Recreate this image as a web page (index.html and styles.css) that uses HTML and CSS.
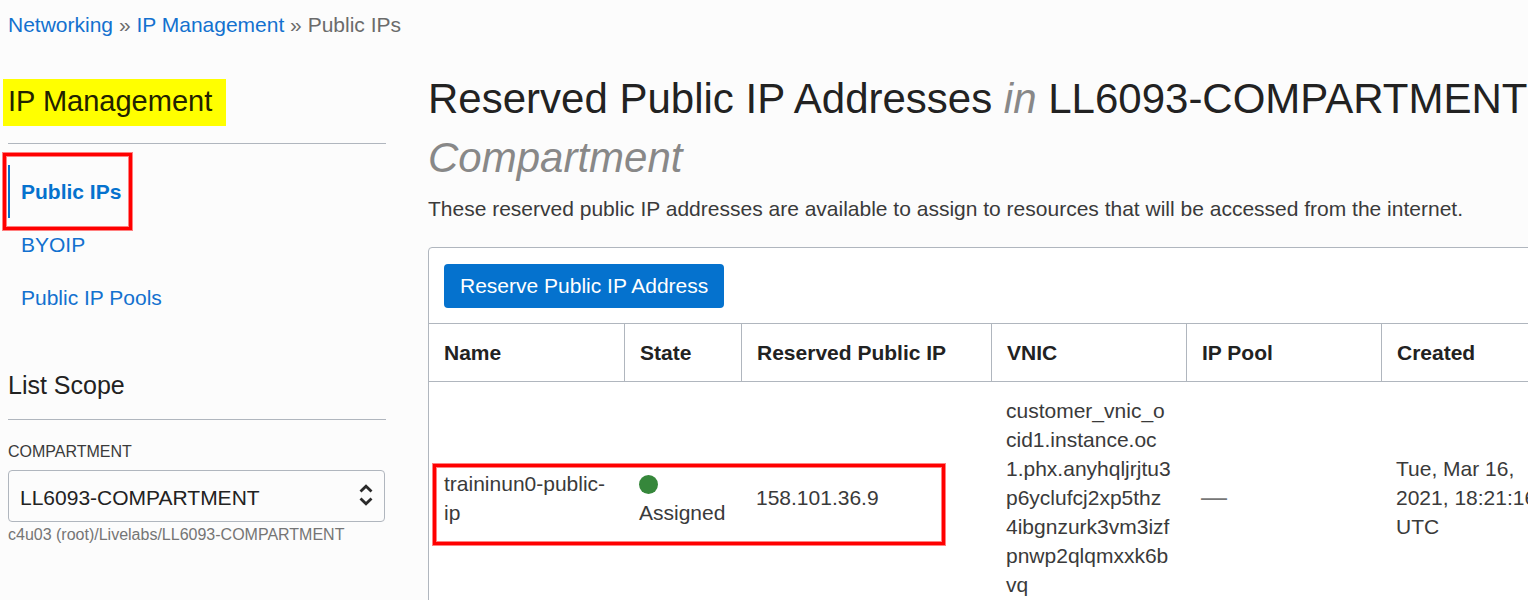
FILE: index.html
```html
<!DOCTYPE html>
<html lang="en">
<head>
<meta charset="utf-8">
<title>Public IPs</title>
<link rel="stylesheet" href="styles.css">
</head>
<body>
<nav class="breadcrumb" aria-label="Breadcrumb"><a href="#">Networking</a> » <a href="#">IP Management</a> » <span>Public IPs</span></nav>
<div class="layout">
  <aside class="sidebar">
    <div class="section-head"><h2 class="section-title">IP Management</h2></div>
    <ul class="menu">
      <li><a class="menu-link active" href="#" aria-current="page">Public IPs<span class="callout callout-menu"></span></a></li>
      <li><a class="menu-link" href="#">BYOIP</a></li>
      <li><a class="menu-link" href="#">Public IP Pools</a></li>
    </ul>
    <h3 class="scope-title">List Scope</h3>
    <label class="field-label" for="compartment">COMPARTMENT</label>
    <div class="select-wrap">
      <select class="select" id="compartment"><option>LL6093-COMPARTMENT</option></select>
      <svg class="select-icon" viewBox="0 0 14 22" aria-hidden="true"><path d="M1.500 7.500 7 2.200l5.500 5.300M1.500 14.500 7 19.800l5.500-5.300"/></svg>
    </div>
    <p class="path">c4u03 (root)/Livelabs/LL6093-COMPARTMENT</p>
  </aside>
  <main class="main">
    <h1 class="title">Reserved Public IP Addresses <em>in</em> LL6093-COMPARTMENT <em>Compartment</em></h1>
    <p class="description">These reserved public IP addresses are available to assign to resources that will be accessed from the internet.</p>
    <section class="card">
      <div class="toolbar"><button class="button" type="button">Reserve Public IP Address</button></div>
      <table class="table">
        <colgroup><col class="col-name"><col class="col-state"><col class="col-ip"><col class="col-std"><col class="col-std"><col class="col-std"></colgroup>
        <thead>
          <tr><th>Name</th><th>State</th><th>Reserved Public IP</th><th>VNIC</th><th>IP Pool</th><th>Created</th></tr>
        </thead>
        <tbody>
          <tr>
            <td>traininun0-public-ip<span class="callout callout-row"></span></td>
            <td><span class="dot"></span><br>Assigned</td>
            <td>158.101.36.9</td>
            <td class="vnic">customer_vnic_ocid1.instance.oc1.phx.anyhqljrjtu3p6yclufcj2xp5thz4ibgnzurk3vm3izfpnwp2qlqmxxk6bvq</td>
            <td class="empty">—</td>
            <td>Tue, Mar 16, 2021, 18:21:16 UTC</td>
          </tr>
        </tbody>
      </table>
    </section>
  </main>
</div>
</body>
</html>
```
FILE: styles.css
```css
* { box-sizing: border-box; }

body {
  margin: 0;
  padding: 10px 0 0 8px;
  overflow: hidden;
  background: #fcfcfc;
  color: #3a3a3a;
  font: 21px/29px "Liberation Sans", Arial, sans-serif;
}

h1, h2, h3, p, ul { margin: 0; padding: 0; font-weight: 400; }

a { color: #1371cf; text-decoration: none; }

.breadcrumb { color: #6b6b6b; }

.layout {
  display: grid;
  grid-template-columns: 378px minmax(0, 1fr);
  gap: 42px;
  padding-top: 30px;
}

/* Sidebar */
.section-head {
  margin-top: 10px;
  padding-bottom: 17px;
  border-bottom: 1px solid #b0b6be;
}

.section-title {
  width: fit-content;
  margin-left: -5px;
  padding: 0 14px 3px 5px;
  background: #ff0;
  color: #222200;
  font-size: 29px;
  line-height: 44px;
}

.menu { list-style: none; padding-top: 21px; }

.menu-link {
  display: block;
  width: fit-content;
  padding: 12px 0 12px 11px;
  border-left: 2px solid transparent;
}

.menu-link.active {
  position: relative;
  border-color: #0572ce;
  color: #0572ce;
  font-weight: 700;
}

.scope-title {
  padding: 46px 0 19px;
  border-bottom: 1px solid #b0b6be;
  color: #222;
  font-size: 25px;
  line-height: 30px;
}

.field-label {
  display: block;
  margin: 21px 0 7px;
  font-size: 16px;
  line-height: 22px;
}

.select-wrap { position: relative; margin-right: 1px; }

.select {
  display: block;
  appearance: none;
  width: 100%;
  height: 52px;
  padding: 2px 40px 0 11px;
  border: 1px solid #b0b6be;
  border-radius: 4px;
  background: #fcfcfc;
  color: #222;
  font: inherit;
}

.select-icon {
  position: absolute;
  top: 14px;
  right: 12px;
  width: 14px;
  height: 22px;
  fill: none;
  stroke: #2a2a2a;
  stroke-width: 2.8;
  pointer-events: none;
}

.path { color: #757575; font-size: 16px; line-height: 26px; }

/* Main */
.title { color: #222; font-size: 42px; line-height: 59px; }
.title em { color: #888; }

.description { padding: 7px 0 24px; white-space: nowrap; }

.card {
  width: max-content;
  border: 1px solid #b0b6be;
  border-radius: 4px;
  background: #fff;
}

.toolbar { padding: 16px 15px 15px; }

.button {
  display: block;
  padding: 0 16px;
  border: 0;
  border-radius: 4px;
  background: #0572ce;
  color: #fff;
  font: inherit;
  line-height: 44px;
}

.table { width: 1148px; table-layout: fixed; border-collapse: separate; border-spacing: 0; }
.col-name { width: 196px; }
.col-state { width: 117px; }
.col-ip { width: 250px; }
.col-std { width: 195px; }

.table th {
  padding: 14px 15px;
  border: 1px solid #b0b6be;
  border-width: 1px 1px 1px 0;
  color: #222;
  text-align: left;
}

.table td { padding: 14px 15px; vertical-align: middle; }
.table td + td { padding-left: 14px; }
.table tbody tr { position: relative; }
.vnic { word-break: break-all; }
.table .empty { color: #777; font-size: 26px; }

.dot {
  display: inline-block;
  width: 19px;
  height: 19px;
  border-radius: 50%;
  background: #36873b;
  vertical-align: middle;
}

/* Red frames drawn over the content */
.callout {
  position: absolute;
  border: 3px solid #f00;
  box-shadow: 0 0 0 1px #ff8080, inset 0 0 0 1px #ff8080;
  pointer-events: none;
}

.callout-menu { inset: -12px -11px; left: -7px; }
.callout-row { top: 82px; left: 4px; width: 512px; height: 81px; }
```
